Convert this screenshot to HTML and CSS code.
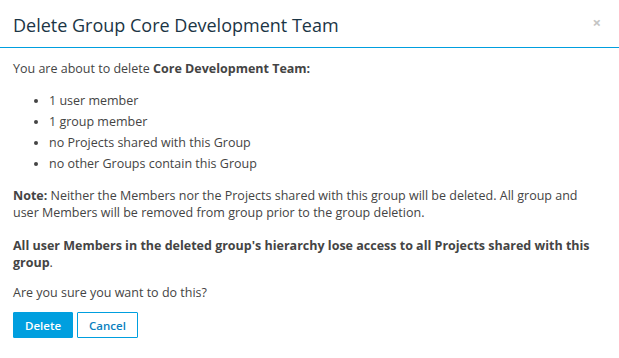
FILE: index.html
```html
<!DOCTYPE html>
<html>
<head>
    <meta charset="utf-8">
    <title>Delete Group</title>
    <link rel="stylesheet" href="styles.css">
</head>
<body>
    <div class="modal">
        <div class="modal-header">
            <span class="modal-title">Delete Group Core Development Team</span>
            <span class="close">&times;</span>
        </div>
        <div class="modal-body">
            <p>You are about to delete <b>Core Development Team:</b></p>
            <ul class="summary">
                <li>1 user member</li>
                <li>1 group member</li>
                <li>no Projects shared with this Group</li>
                <li>no other Groups contain this Group</li>
            </ul>
            <p class="note"><b>Note:</b> Neither the Members nor the Projects shared with this group will be deleted. All group and user Members will be removed from group prior to the group deletion.</p>
            <p class="warning"><b>All user Members in the deleted group's hierarchy lose access to all Projects shared with this group</b>.</p>
            <p>Are you sure you want to do this?</p>
            <div class="actions">
                <button class="btn btn-primary">Delete</button>
                <button class="btn btn-default">Cancel</button>
            </div>
        </div>
    </div>
</body>
</html>
```

FILE: styles.css
```css
html,
body {
    background: #fff;
    padding: 0;
    margin: 0;
    font-family: "Open Sans", "Liberation Sans", sans-serif;
    color: #444;
}

.modal-header {
    display: flex;
    align-items: center;
    justify-content: space-between;
    height: 47px;
    padding: 0 13px;
    border-bottom: 1px solid #009fdf;
}

.modal-title {
    font-size: 18px;
    color: #1b3545;
    margin-top: 2px;
}

.close {
    color: #c4c4c4;
    font-size: 15px;
    font-weight: bold;
    margin-top: -4px;
    margin-right: 5px;
}

.modal-body {
    padding: 12px 13px;
    font-size: 12.5px;
}

.modal-body p {
    margin: 0 0 13px;
    line-height: 17px;
}

.modal-body b {
    font-weight: 700;
}

.summary {
    margin: 0 0 13px;
    padding-left: 36px;
}

.summary li {
    line-height: 21px;
}

.modal-body .note {
    margin-bottom: 16px;
}

.actions {
    display: flex;
    gap: 4px;
    margin-top: -2px;
}

.btn {
    font-family: inherit;
    font-size: 11.5px;
    font-weight: 600;
    height: 26px;
    padding: 0 11px;
    border-radius: 1px;
    cursor: pointer;
}

.btn-primary {
    background: #009fdf;
    border: 1px solid #009fdf;
    color: #fff;
}

.btn-default {
    background: #fff;
    border: 1px solid #009fdf;
    color: #0a7fc0;
}
```
